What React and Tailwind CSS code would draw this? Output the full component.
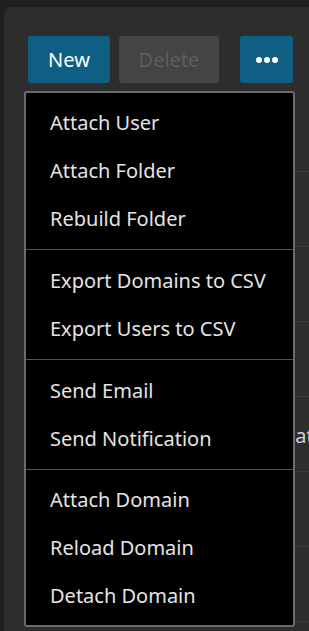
import React from "react";

const groups = [
  { pt: "pt-[6px]", items: ["Attach User", "Attach Folder", "Rebuild Folder"] },
  { pt: "pt-[7px]", items: ["Export Domains to CSV", "Export Users to CSV"] },
  { pt: "pt-[7px]", items: ["Send Email", "Send Notification"] },
  { pt: "pt-[6px]", items: ["Attach Domain", "Reload Domain", "Detach Domain"] },
];

const rows = ["", "", "", "", "Status", "", ""];

const MoreMenu = () => {
  return (
    <div className="absolute left-[20px] top-[84px] flex h-[536px] w-[271px] flex-col rounded-[3px] border-2 border-[#6b6b6b] bg-black">
      {groups.map((group, i) => (
        <div
          key={i}
          className={`${group.pt} pb-[6px] ${i > 0 ? "border-t border-[#555555]" : ""}`}
        >
          {group.items.map((label) => (
            <button
              key={label}
              className="flex h-[48px] w-full items-center pl-6 text-left text-[20px] text-[#e4e4e4]"
            >
              {label}
            </button>
          ))}
        </div>
      ))}
    </div>
  );
};

const App = () => {
  return (
    <div
      className="min-h-screen bg-[#1f1f1f] pl-1 pt-[7px]"
      style={{ fontFamily: '"Noto Sans", "Open Sans", sans-serif' }}
    >
      <div className="relative h-[624px] overflow-hidden rounded-tl-lg bg-[#2d2d2d] pl-6 pt-[29px]">
        {/* Toolbar */}
        <div className="flex items-center">
          <button className="h-[47px] w-[82px] rounded-[3px] bg-[#0f5f84] text-[20px] text-white">
            New
          </button>
          <button className="ml-[9px] h-[47px] w-[100px] rounded-[3px] bg-[#444444] text-[20px] text-[#5c5c5c]">
            Delete
          </button>
          <button className="ml-[21px] flex h-[47px] w-[53px] items-center justify-center gap-[2px] rounded-[3px] bg-[#0f5f84]">
            <span className="h-[6px] w-[6px] rounded-full bg-white" />
            <span className="h-[6px] w-[6px] rounded-full bg-white" />
            <span className="h-[6px] w-[6px] rounded-full bg-white" />
          </button>
        </div>

        {/* Table behind the menu */}
        <div className="mt-[14px]">
          {rows.map((text, i) => (
            <div
              key={i}
              className="flex h-[75px] items-center border-b border-[#3a3a3a] text-[20px] text-[#d0d0d0]"
            >
              {text && <span className="ml-[249px] whitespace-nowrap pt-[4px]">{text}</span>}
            </div>
          ))}
        </div>

        <MoreMenu />
      </div>
    </div>
  );
};

export default App;
